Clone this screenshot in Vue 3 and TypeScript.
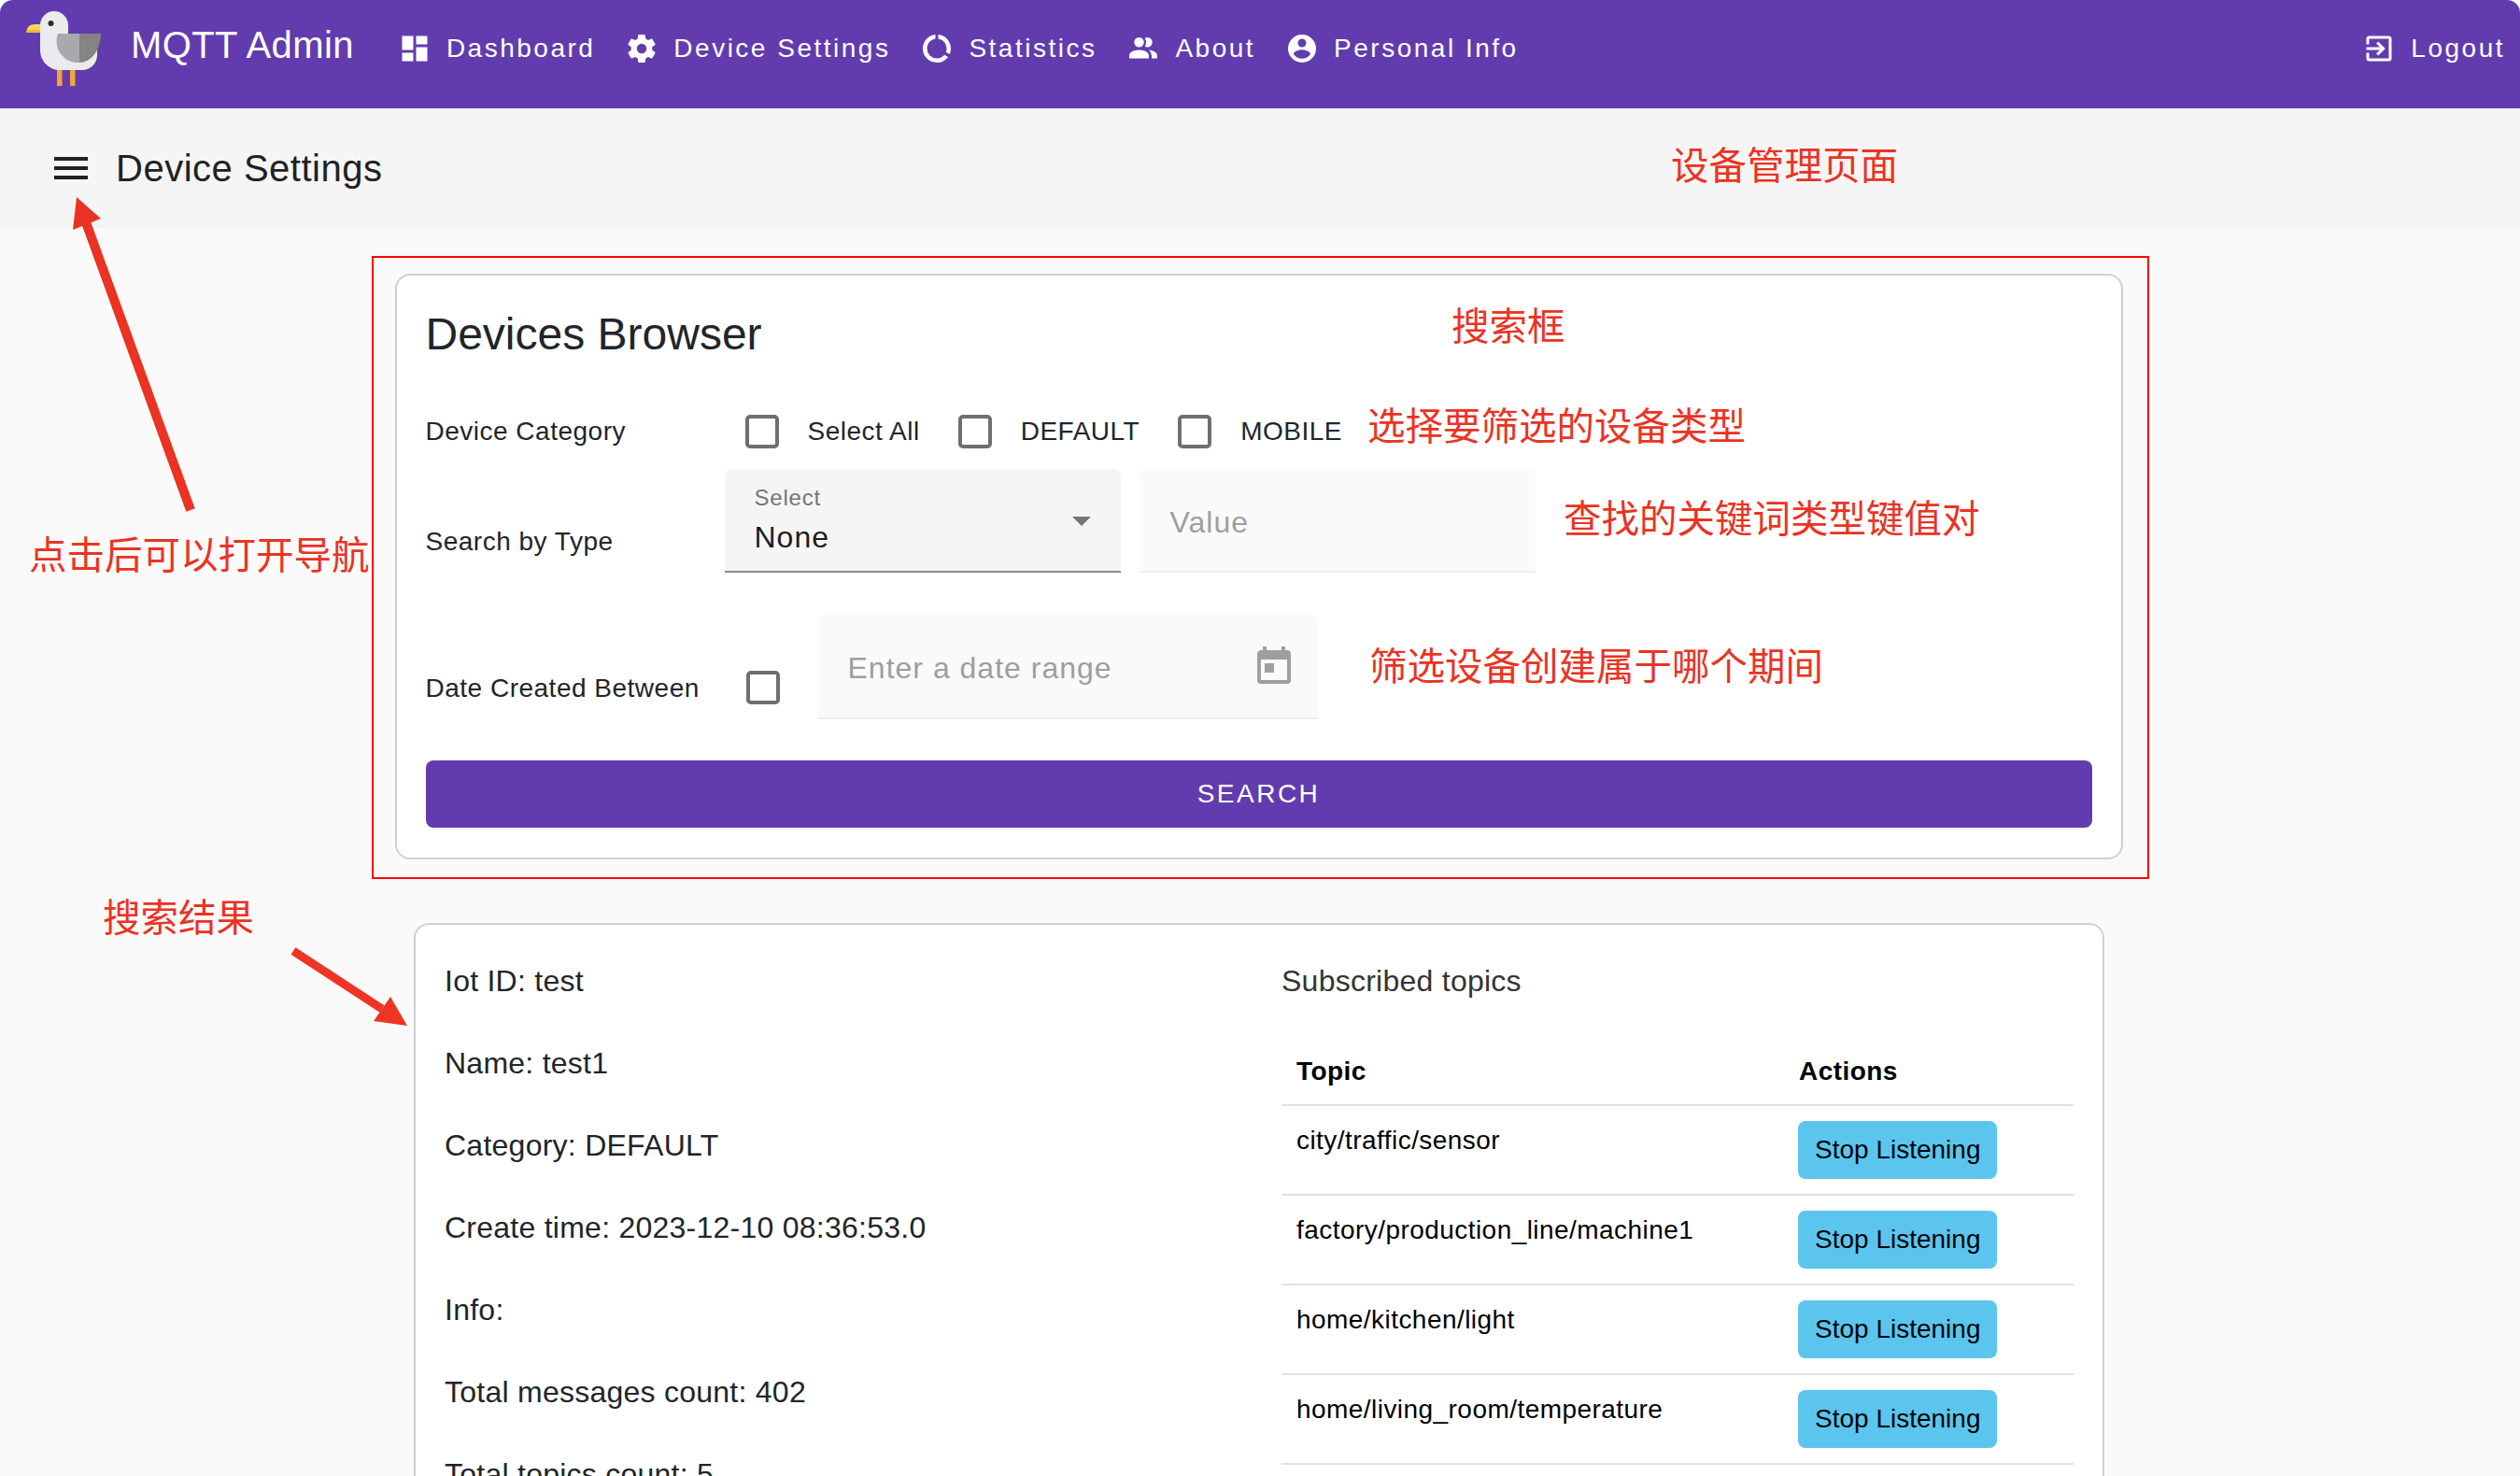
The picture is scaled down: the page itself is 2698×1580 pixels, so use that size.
<script setup lang="ts">
interface NavItem { label: string; path: string }

const navItems: NavItem[] = [
  { label: 'Dashboard', path: 'M13,3V9H21V3M13,21H21V11H13M3,21H11V15H3M3,13H11V3H3V13Z' },
  { label: 'Device Settings', path: 'M12,15.5A3.5,3.5 0 0,1 8.5,12A3.5,3.5 0 0,1 12,8.5A3.5,3.5 0 0,1 15.5,12A3.5,3.5 0 0,1 12,15.5M19.43,12.97C19.47,12.65 19.5,12.33 19.5,12C19.5,11.67 19.47,11.34 19.43,11L21.54,9.37C21.73,9.22 21.78,8.95 21.66,8.73L19.66,5.27C19.54,5.05 19.27,4.96 19.05,5.05L16.56,6.05C16.04,5.66 15.5,5.32 14.87,5.07L14.5,2.42C14.46,2.18 14.25,2 14,2H10C9.75,2 9.54,2.18 9.5,2.42L9.13,5.07C8.5,5.32 7.96,5.66 7.44,6.05L4.95,5.05C4.73,4.96 4.46,5.05 4.34,5.27L2.34,8.73C2.21,8.95 2.27,9.22 2.46,9.37L4.57,11C4.53,11.34 4.5,11.67 4.5,12C4.5,12.33 4.53,12.65 4.57,12.97L2.46,14.63C2.27,14.78 2.21,15.05 2.34,15.27L4.34,18.73C4.46,18.95 4.73,19.03 4.95,18.95L7.44,17.94C7.96,18.34 8.5,18.68 9.13,18.93L9.5,21.58C9.54,21.82 9.75,22 10,22H14C14.25,22 14.46,21.82 14.5,21.58L14.87,18.93C15.5,18.67 16.04,18.34 16.56,17.94L19.05,18.95C19.27,19.03 19.54,18.95 19.66,18.73L21.66,15.27C21.78,15.05 21.73,14.78 21.54,14.63L19.43,12.97Z' },
  { label: 'Statistics', path: 'M13,2.05V5.08C16.39,5.57 19,8.47 19,12C19,12.9 18.82,13.75 18.5,14.54L21.12,16.07C21.68,14.83 22,13.45 22,12C22,6.82 18.05,2.55 13,2.05M12,19A7,7 0 0,1 5,12C5,8.47 7.61,5.57 11,5.08V2.05C5.94,2.55 2,6.81 2,12A10,10 0 0,0 12,22C15.3,22 18.23,20.39 20.05,17.93L17.45,16.42C16.17,18 14.21,19 12,19Z' },
  { label: 'About', path: 'M16 17V19H2V17S2 13 9 13 16 17 16 17M12.5 7.5A3.5 3.5 0 1 0 9 11A3.5 3.5 0 0 0 12.5 7.5M15.94 13A5.32 5.32 0 0 1 18 17V19H22V17S22 13.37 15.94 13M15 4A3.39 3.39 0 0 0 13.07 4.59A5 5 0 0 1 13.07 10.41A3.39 3.39 0 0 0 15 11A3.5 3.5 0 0 0 15 4Z' },
  { label: 'Personal Info', path: 'M12,19.2C9.5,19.2 7.29,17.92 6,16C6.03,14 10,12.9 12,12.9C14,12.9 17.97,14 18,16C16.71,17.92 14.5,19.2 12,19.2M12,5A3,3 0 0,1 15,8A3,3 0 0,1 12,11A3,3 0 0,1 9,8A3,3 0 0,1 12,5M12,2A10,10 0 0,0 2,12A10,10 0 0,0 12,22A10,10 0 0,0 22,12A10,10 0 0,0 12,2Z' },
]
const logoutPath = 'M19,3H5C3.89,3 3,3.89 3,5V9H5V5H19V19H5V15H3V19A2,2 0 0,0 5,21H19A2,2 0 0,0 21,19V5C21,3.89 20.1,3 19,3M10.08,15.58L11.5,17L16.5,12L11.5,7L10.08,8.41L12.67,11H3V13H12.67L10.08,15.58Z'

const categories: string[] = ['Select All', 'DEFAULT', 'MOBILE']

const details: string[] = [
  'Iot ID: test',
  'Name: test1',
  'Category: DEFAULT',
  'Create time: 2023-12-10 08:36:53.0',
  'Info:',
  'Total messages count: 402',
  'Total topics count: 5',
]

const topics: string[] = [
  'city/traffic/sensor',
  'factory/production_line/machine1',
  'home/kitchen/light',
  'home/living_room/temperature',
]

const notes: { text: string; cls: string }[] = [
  { text: '设备管理页面', cls: 'n-page' },
  { text: '搜索框', cls: 'n-box' },
  { text: '选择要筛选的设备类型', cls: 'n-cat' },
  { text: '查找的关键词类型键值对', cls: 'n-key' },
  { text: '筛选设备创建属于哪个期间', cls: 'n-date' },
  { text: '点击后可以打开导航', cls: 'n-nav' },
  { text: '搜索结果', cls: 'n-result' },
]
</script>

<template>
  <div class="page">
    <header class="topbar">
      <svg class="logo" viewBox="0 0 80 80" aria-hidden="true">
        <path d="M0 23 Q1 14 9 14 H16 V23 Z" fill="#f6d55c" />
        <path d="M0 23 H16 V20 H2 Q0.5 21 0 23 Z" fill="#f2b632" />
        <rect x="33" y="62" width="5.5" height="18" fill="#f2a33a" />
        <rect x="47" y="62" width="5.5" height="18" fill="#f2a33a" />
        <path d="M15 15 A15 15 0 0 1 45 15 V30 H76 V47 A16 16 0 0 1 60 63 H36 A21 21 0 0 1 15 42 Z" fill="#ebebed" />
        <circle cx="26.500" cy="13" r="3" fill="#2b2b2b" />
        <path d="M34 24 H57 V55 A23 23 0 0 1 34 24 Z" fill="#a9a9ad" />
        <path d="M57 24 H80 A23 31 0 0 1 57 55 Z" fill="#848484" />
      </svg>
      <span class="brand">MQTT Admin</span>
      <nav class="nav">
        <a v-for="item in navItems" :key="item.label" class="nav-btn">
          <svg class="nav-icon" viewBox="0 0 24 24" aria-hidden="true"><path :d="item.path" /></svg>
          <span>{{ item.label }}</span>
        </a>
      </nav>
      <a class="nav-btn logout">
        <svg class="nav-icon" viewBox="0 0 24 24" aria-hidden="true"><path :d="logoutPath" /></svg>
        <span>Logout</span>
      </a>
    </header>

    <div class="subbar">
      <svg class="menu" viewBox="0 0 24 24" aria-hidden="true"><path d="M3,6H21V8H3V6M3,11H21V13H3V11M3,16H21V18H3V16Z" /></svg>
      <h1 class="subtitle">Device Settings</h1>
    </div>

    <main class="content">
      <div class="red-frame">
        <section class="card search">
          <h2 class="search-title">Devices Browser</h2>

          <div class="row row-cat">
            <div class="label">Device Category</div>
            <label v-for="c in categories" :key="c" class="opt">
              <span class="check"></span>
              <span>{{ c }}</span>
            </label>
          </div>

          <div class="row row-type">
            <div class="label label-type">Search by Type</div>
            <div class="field select">
              <div>
                <div class="select-label">Select</div>
                <div class="select-value">None</div>
              </div>
              <span class="caret"></span>
            </div>
            <div class="field ghost value">Value</div>
          </div>

          <div class="row row-date">
            <div class="label label-date">Date Created Between</div>
            <span class="check check-date"></span>
            <div class="field ghost date">
              <span>Enter a date range</span>
              <svg class="cal" viewBox="0 0 24 24" aria-hidden="true"><path d="M7,10H12V15H7M19,19H5V8H19M19,3H18V1H16V3H8V1H6V3H5C3.89,3 3,3.9 3,5V19A2,2 0 0,0 5,21H19A2,2 0 0,0 21,19V5A2,2 0 0,0 19,3Z" /></svg>
            </div>
          </div>

          <button class="search-btn" type="button">SEARCH</button>
        </section>
      </div>

      <section class="card result">
        <div class="details">
          <p v-for="d in details" :key="d">{{ d }}</p>
        </div>
        <div class="subs">
          <p class="subs-title">Subscribed topics</p>
          <table class="topics">
            <thead>
              <tr><th class="col-topic">Topic</th><th>Actions</th></tr>
            </thead>
            <tbody>
              <tr v-for="t in topics" :key="t">
                <td>{{ t }}</td>
                <td><button class="stop" type="button">Stop Listening</button></td>
              </tr>
            </tbody>
          </table>
        </div>
      </section>
    </main>

    <svg class="arrows" viewBox="0 0 2698 1580" aria-hidden="true">
      <line x1="204" y1="546" x2="92" y2="238" stroke="#ea3323" stroke-width="10" />
      <polygon points="82,211 108,234 78,246" fill="#ea3323" />
      <line x1="314" y1="1018" x2="409" y2="1080" stroke="#ee3424" stroke-width="9" />
      <polygon points="436,1098 400,1093 418,1067" fill="#ee3424" />
    </svg>

    <div v-for="n in notes" :key="n.cls" class="note" :class="n.cls">{{ n.text }}</div>
  </div>
</template>

<style>
html, body { margin: 0; background: #fff; }
</style>

<style scoped>
.page {
  position: relative;
  width: 2698px;
  height: 1580px;
  overflow: hidden;
  background: #fafafa;
  font-family: "Liberation Sans", Arial, sans-serif;
  color: #212529;
}

/* top bar */
.topbar {
  display: flex;
  align-items: center;
  height: 116px;
  box-sizing: border-box;
  padding: 0 0 12px 28px;
  background: #623cae;
  border-radius: 14px 14px 0 0;
  color: #fff;
}
.logo { width: 80px; height: 80px; flex: none; }
.brand {
  margin: 0 31px 8px 32px;
  font-size: 40px;
  letter-spacing: 0.4px;
  line-height: 48px;
  white-space: nowrap;
}
.nav { display: flex; flex: 1; }
.nav-btn {
  display: flex;
  align-items: center;
  gap: 16px;
  padding: 0 16px;
  font-size: 28px;
  letter-spacing: 2.5px;
  white-space: nowrap;
}
.nav-icon { width: 36px; height: 36px; fill: #fff; flex: none; }

/* sub bar */
.subbar {
  display: flex;
  align-items: center;
  height: 128px;
  padding-left: 52px;
  background: #f5f5f5;
}
.menu { width: 48px; height: 48px; fill: #212121; flex: none; }
.subtitle {
  margin: 0 0 0 24px;
  font-size: 40px;
  font-weight: 400;
  letter-spacing: 0.5px;
  color: #212121;
}

/* content */
.content { display: flex; flex-direction: column; align-items: center; }
.red-frame {
  box-sizing: border-box;
  width: 1903px;
  margin-top: 30px;
  padding: 17px 26px 19px 23px;
  border: 2px solid #f00;
}
.card {
  box-sizing: border-box;
  background: #fff;
  border: 2px solid #d0d0d0;
  border-radius: 16px;
}
.search { padding: 34px 31px 32px; }
.search-title {
  margin: 0;
  font-size: 48px;
  font-weight: 400;
  line-height: 58px;
}
.row { display: flex; align-items: flex-start; font-size: 28px; letter-spacing: 0.5px; }
.row-cat { margin-top: 57px; align-items: center; height: 36px; }
.row-type { margin-top: 22px; }
.row-date { margin-top: 45px; }
.label { width: 320px; flex: none; line-height: 42px; white-space: nowrap; }
.label-type { margin-top: 57px; }
.label-date { margin-top: 58px; }
.opt { display: flex; align-items: center; gap: 31px; margin-left: 22px; margin-right: 19px; white-space: nowrap; }
.check {
  display: block;
  box-sizing: border-box;
  width: 36px;
  height: 36px;
  flex: none;
  border: 4px solid #6f6f6f;
  border-radius: 5px;
}
.check-date { margin: 60px 41px 0 23px; }

.field {
  box-sizing: border-box;
  border-radius: 8px 8px 0 0;
  font-size: 32px;
  letter-spacing: 1px;
}
.select {
  display: flex;
  justify-content: space-between;
  width: 424px;
  height: 111px;
  padding: 15px 32px 0;
  background: #f5f5f5;
  border-bottom: 2px solid #8a8a8a;
  color: #1d1d1d;
}
.select-label { font-size: 24px; line-height: 32px; letter-spacing: 0.8px; color: #757575; }
.select-value { margin-top: 2px; line-height: 48px; }
.caret {
  width: 0;
  height: 0;
  margin-top: 36px;
  border-left: 10px solid transparent;
  border-right: 10px solid transparent;
  border-top: 10px solid #757575;
}
.ghost {
  background: #fafafa;
  border-bottom: 2px solid #eeeeee;
  color: #9e9e9e;
  line-height: 48px;
}
.value { width: 424px; height: 111px; margin-left: 20px; padding: 33px 0 0 33px; }
.date {
  display: flex;
  justify-content: space-between;
  width: 535px;
  height: 112px;
  padding: 33px 23px 0 32px;
}
.cal { width: 48px; height: 48px; margin-top: -1px; fill: #9e9e9e; flex: none; }
.search-btn {
  display: block;
  width: 100%;
  height: 72px;
  margin-top: 44px;
  border: 0;
  border-radius: 8px;
  background: #623cae;
  color: #fff;
  font-family: inherit;
  font-size: 28px;
  letter-spacing: 2.5px;
}

/* result */
.result {
  display: flex;
  flex: none;
  width: 1810px;
  margin: 47px 2px 0 0;
  padding: 36px 31px 0;
  font-size: 32px;
  letter-spacing: 0.25px;
  line-height: 48px;
}
.details { width: 896px; flex: none; }
.details p { margin: 0 0 40px; white-space: nowrap; }
.subs { flex: 1; }
.subs-title { margin: 0 0 34px; color: #333; }
.topics {
  width: 848px;
  border-collapse: collapse;
  font-size: 28px;
  letter-spacing: 0.45px;
  line-height: 42px;
  color: #000;
}
.topics th, .topics td {
  padding: 16px;
  text-align: left;
  vertical-align: top;
  border-bottom: 2px solid #dee2e6;
}
.topics th { padding: 18px 16px 14px; }
.col-topic { width: 506px; }
.stop {
  display: block;
  box-sizing: border-box;
  height: 62px;
  padding: 0 18px;
  margin-left: -1px;
  border: 0;
  border-radius: 8px;
  background: #5bc5ee;
  color: #000;
  font-family: inherit;
  font-size: 28px;
  white-space: nowrap;
}

/* annotations */
.arrows { position: absolute; left: 0; top: 0; width: 2698px; height: 1580px; pointer-events: none; }
.note {
  position: absolute;
  font-family: "Noto Sans CJK SC", "Liberation Sans", sans-serif;
  font-size: 40.5px;
  line-height: 48px;
  color: #ea3323;
  white-space: nowrap;
}
.n-page { left: 1789px; top: 151px; }
.n-box { left: 1554px; top: 323px; }
.n-cat { left: 1464px; top: 430px; }
.n-key { left: 1674px; top: 529px; }
.n-date { left: 1466px; top: 687px; }
.n-nav { left: 31px; top: 568px; }
.n-result { left: 110px; top: 956px; }
</style>
